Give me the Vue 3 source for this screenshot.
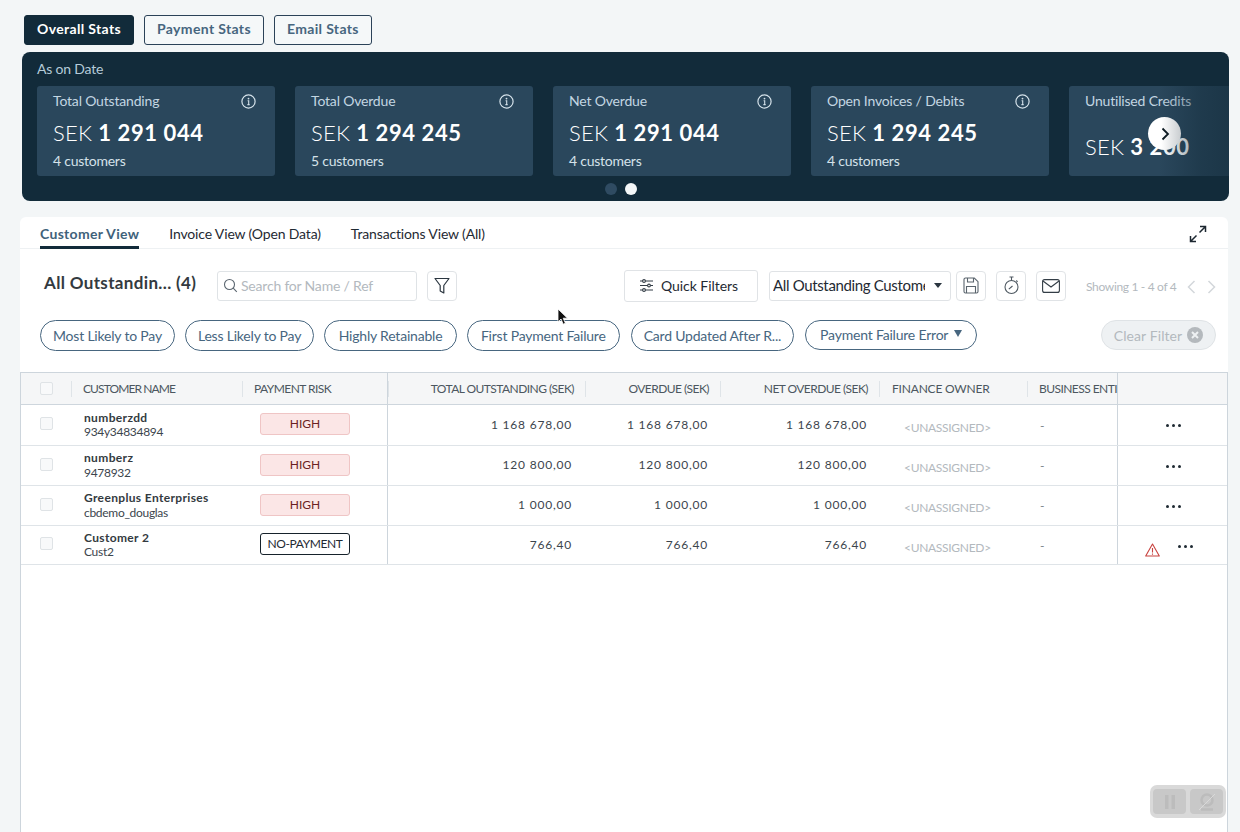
<script setup>
const statTabs = ['Overall Stats', 'Payment Stats', 'Email Stats'];

const cards = [
  { title: 'Total Outstanding', value: '1 291 044', sub: '4 customers' },
  { title: 'Total Overdue', value: '1 294 245', sub: '5 customers' },
  { title: 'Net Overdue', value: '1 291 044', sub: '4 customers' },
  { title: 'Open Invoices / Debits', value: '1 294 245', sub: '4 customers' },
  { title: 'Unutilised Credits', value: '3 200', sub: '' },
];

const viewTabs = ['Customer View', 'Invoice View (Open Data)', 'Transactions View (All)'];

const chips = ['Most Likely to Pay', 'Less Likely to Pay', 'Highly Retainable', 'First Payment Failure', 'Card Updated After R...'];

const columns = [
  { label: 'CUSTOMER NAME' },
  { label: 'PAYMENT RISK', end: true },
  { label: 'TOTAL OUTSTANDING (SEK)', right: true },
  { label: 'OVERDUE (SEK)', right: true },
  { label: 'NET OVERDUE (SEK)', right: true },
  { label: 'FINANCE OWNER' },
  { label: 'BUSINESS ENTI', last: true },
];

const rows = [
  { name: 'numberzdd', ref: '934y34834894', risk: 'HIGH', total: '1 168 678,00', overdue: '1 168 678,00', net: '1 168 678,00', h: 41 },
  { name: 'numberz', ref: '9478932', risk: 'HIGH', total: '120 800,00', overdue: '120 800,00', net: '120 800,00', h: 40 },
  { name: 'Greenplus Enterprises', ref: 'cbdemo_douglas', risk: 'HIGH', total: '1 000,00', overdue: '1 000,00', net: '1 000,00', h: 40 },
  { name: 'Customer 2', ref: 'Cust2', risk: 'NO-PAYMENT', total: '766,40', overdue: '766,40', net: '766,40', h: 39, warn: true },
];
</script>

<template>
  <div class="page">
    <div class="stat-tabs">
      <button v-for="(t, i) in statTabs" :key="t" class="stat-tab" :class="{ active: i === 0 }">{{ t }}</button>
    </div>

    <section class="panel">
      <div class="as-on">As on Date</div>
      <div class="carousel">
        <div v-for="c in cards" :key="c.title" class="card">
          <div class="card-head">
            <span>{{ c.title }}</span>
            <svg v-if="c.sub" class="info" width="15" height="15" viewBox="0 0 15 15" fill="none">
              <circle cx="7.5" cy="7.5" r="6.6" stroke="#d5e2ea" stroke-width="1.2" />
              <circle cx="7.5" cy="4.6" r="0.9" fill="#d5e2ea" />
              <path d="M6.6 6.8h1.1v3.6M6.4 10.6h2.3" stroke="#d5e2ea" stroke-width="1.1" />
            </svg>
          </div>
          <div class="card-value">SEK <b>{{ c.value }}</b></div>
          <div v-if="c.sub" class="card-sub">{{ c.sub }}</div>
        </div>
        <div class="fade"></div>
      </div>
      <div class="dots">
        <span class="dot"></span>
        <span class="dot on"></span>
      </div>
      <div class="next">
        <svg width="10" height="14" viewBox="0 0 10 14" fill="none">
          <path d="M2.5 1.5 8 7l-5.500 5.500" stroke="#0d1a22" stroke-width="1.8" />
        </svg>
      </div>
    </section>

    <section class="main">
      <div class="view-tabs">
        <span v-for="(t, i) in viewTabs" :key="t" class="view-tab" :class="{ active: i === 0 }">{{ t }}</span>
        <svg class="expand" width="18" height="18" viewBox="0 0 18 18" fill="none">
          <path d="M10.500 7.500 16.500 1.500M11 1.500h5.500V7" stroke="#1c2730" stroke-width="1.500" />
          <path d="M7.500 10.500 1.500 16.500M1.500 11v5.500H7" stroke="#1c2730" stroke-width="1.500" />
        </svg>
      </div>

      <div class="toolbar">
        <div class="list-title">All Outstandin... (4)</div>
        <div class="search">
          <svg width="15" height="15" viewBox="0 0 15 15" fill="none">
            <circle cx="6.500" cy="6.500" r="5" stroke="#5b6670" stroke-width="1.100" />
            <path d="m10.200 10.200 3.600 3.600" stroke="#5b6670" stroke-width="1.100" />
          </svg>
          <span>Search for Name / Ref</span>
        </div>
        <div class="icon-btn filter">
          <svg width="16" height="17" viewBox="0 0 16 17" fill="none">
            <path d="M1 1.500h14L9.800 8.500v7.500L6.200 14V8.500L1 1.500Z" stroke="#2b3640" stroke-width="1.200" stroke-linejoin="round" />
          </svg>
        </div>

        <div class="toolbar-right">
          <div class="quick">
            <svg width="15" height="13" viewBox="0 0 15 13" fill="none" stroke="#333d46" stroke-width="1.100">
              <path d="M1 2h13M1 6.500h13M1 11h13" />
              <circle cx="5" cy="2" r="1.400" fill="#fff" />
              <circle cx="10" cy="6.500" r="1.400" fill="#fff" />
              <circle cx="5" cy="11" r="1.400" fill="#fff" />
            </svg>
            <span>Quick Filters</span>
          </div>
          <div class="select">
            <span class="select-text">All Outstanding Customers</span>
            <i class="caret"></i>
          </div>
          <div class="icon-btn">
            <svg width="16" height="17" viewBox="0 0 16 17" fill="none" stroke="#5a646d" stroke-width="1.100">
              <path d="M1 2.500A1.500 1.500 0 0 1 2.500 1h8.800L15 4.700v9.800a1.500 1.500 0 0 1-1.500 1.500h-11A1.500 1.500 0 0 1 1 14.500Z" />
              <path d="M4.500 1v4h6V1M3.500 16v-6.500h9V16" />
            </svg>
          </div>
          <div class="icon-btn gap10">
            <svg width="15" height="19" viewBox="0 0 15 19" fill="none" stroke="#4f5962" stroke-width="1.100">
              <circle cx="7.500" cy="11" r="6.500" />
              <path d="M5.500 1h4M7.500 1v3.500M12.300 4.500l1.300 1.300M4.800 13.200l3.700-3.200" />
            </svg>
          </div>
          <div class="icon-btn gap10">
            <svg width="18" height="14" viewBox="0 0 18 14" fill="none" stroke="#333d46" stroke-width="1.100">
              <rect x="0.600" y="0.600" width="16.800" height="12.800" rx="2" />
              <path d="m1 2 8 6 8-6" />
            </svg>
          </div>
          <span class="showing">Showing 1 - 4 of 4</span>
          <svg class="chev" width="9" height="14" viewBox="0 0 9 14" fill="none">
            <path d="M7.500 1 1.500 7l6 6" stroke="#d3d7db" stroke-width="1.500" />
          </svg>
          <svg class="chev next-chev" width="9" height="14" viewBox="0 0 9 14" fill="none">
            <path d="m1.500 1 6 6-6 6" stroke="#d3d7db" stroke-width="1.500" />
          </svg>
        </div>
      </div>

      <div class="chips">
        <span v-for="c in chips" :key="c" class="chip">{{ c }}</span>
        <span class="chip drop">Payment Failure Error <i class="chip-caret"></i></span>
        <span class="clear">
          Clear Filter
          <svg width="16" height="16" viewBox="0 0 16 16">
            <circle cx="8" cy="8" r="8" fill="#b4b9bd" />
            <path d="m5 5 6 6M11 5l-6 6" stroke="#eef1f3" stroke-width="2" />
          </svg>
        </span>
      </div>

      <div class="table">
        <div class="row head">
          <div class="cell check"><i class="box"></i></div>
          <div
            v-for="col in columns"
            :key="col.label"
            class="cell th"
            :class="{ right: col.right, end: col.end, last: col.last }"
          >
            <span>{{ col.label }}</span>
          </div>
          <div class="cell actions"></div>
        </div>

        <div v-for="r in rows" :key="r.name" class="row" :style="{ height: r.h + 'px' }">
          <div class="cell check up"><i class="box"></i></div>
          <div class="cell name">
            <b>{{ r.name }}</b>
            <span>{{ r.ref }}</span>
          </div>
          <div class="cell risk end">
            <span class="badge" :class="{ none: r.risk !== 'HIGH' }">{{ r.risk }}</span>
          </div>
          <div class="cell num">{{ r.total }}</div>
          <div class="cell num">{{ r.overdue }}</div>
          <div class="cell num">{{ r.net }}</div>
          <div class="cell owner">&lt;UNASSIGNED&gt;</div>
          <div class="cell entity">-</div>
          <div class="cell actions">
            <svg v-if="r.warn" class="warn" width="15" height="14" viewBox="0 0 15 14" fill="none">
              <path d="M7.500 1 14.300 13H.7Z" stroke="#c8423f" stroke-width="1.100" stroke-linejoin="round" />
              <path d="M7.500 5v4.500M7.500 10.500v1.200" stroke="#c8423f" stroke-width="1.100" />
            </svg>
            <span class="more" :class="{ shifted: r.warn }"><i></i><i></i><i></i></span>
          </div>
        </div>
      </div>
    </section>

    <svg class="cursor" width="12" height="18" viewBox="0 0 12 18">
      <path d="M1 1v13l3-3 2.200 5.200 2.200-1-2.200-5h4.300Z" fill="#111" stroke="#fff" stroke-width="0.800" />
    </svg>

    <div class="recorder">
      <div class="rec-btn">
        <svg width="14" height="14" viewBox="0 0 14 14"><path d="M2 0h3.500v14H2zM8.500 0H12v14H8.500z" fill="#bcbcbc" /></svg>
      </div>
      <div class="rec-btn">
        <svg width="20" height="18" viewBox="0 0 20 18" fill="none" stroke="#bcbcbc">
          <circle cx="10" cy="7" r="5.500" stroke-width="2.500" />
          <path d="M4 16.500h12" stroke-width="2.500" />
          <path d="M2 17 18 1" stroke="#d9d9d9" stroke-width="1" />
        </svg>
      </div>
    </div>
  </div>
</template>

<style>
html,
body {
  margin: 0;
  background: #f3f6f7;
}
</style>

<style scoped>
.page {
  position: relative;
  width: 1240px;
  height: 832px;
  overflow: hidden;
  font-family: Lato, "Liberation Sans", sans-serif;
  background: #f3f6f7;
  color: #1f2a33;
}

.stat-tabs {
  display: flex;
  gap: 10px;
  padding: 15px 0 0 24px;
  height: 37px;
}
.stat-tab {
  height: 30px;
  padding: 0 12px 3px;
  background: #f5f8f9;
  border: 1px solid #2b4258;
  border-radius: 3px;
  font: 700 14px Lato, sans-serif;
  letter-spacing: 0.35px;
  color: #47667f;
}
.stat-tab.active {
  background: #122b3a;
  border-color: #122b3a;
  color: #fff;
}

.panel {
  position: relative;
  width: 1207px;
  height: 149px;
  margin-left: 22px;
  box-sizing: border-box;
  padding-top: 8px;
  background: #122b3a;
  border-radius: 8px;
  overflow: hidden;
}
.as-on {
  margin-left: 15px;
  font-size: 14px;
  line-height: 17px;
  letter-spacing: -0.2px;
  color: #b5cbd9;
}
.carousel {
  position: relative;
  display: flex;
  gap: 20px;
  margin: 9px 0 0 15px;
  overflow: hidden;
}
.card {
  flex: 0 0 238px;
  height: 90px;
  box-sizing: border-box;
  padding: 6px 16px 0;
  display: flex;
  flex-direction: column;
  background: #2a475c;
  border-radius: 3px;
}
.card-head {
  display: flex;
  justify-content: space-between;
  align-items: center;
  height: 17px;
  padding-right: 3px;
  font-size: 14px;
  letter-spacing: -0.18px;
  white-space: nowrap;
  color: #c3d6e2;
}
.info {
  margin-top: 1px;
}
.card-value {
  margin-top: auto;
  font-size: 22px;
  line-height: 26px;
  font-weight: 300;
  letter-spacing: 0.2px;
  color: #fff;
  white-space: nowrap;
  margin-bottom: 16px;
}
.card-value b {
  font-weight: 700;
  letter-spacing: 0.6px;
}
.card-value:not(:last-child) {
  margin-top: 11px;
  margin-bottom: 0;
}
.card-sub {
  margin-top: 6px;
  font-size: 14px;
  line-height: 17px;
  letter-spacing: -0.25px;
  color: #d5e2ea;
}
.fade {
  position: absolute;
  top: 0;
  right: 0;
  width: 70px;
  height: 90px;
  background: linear-gradient(90deg, rgba(18, 43, 58, 0), rgba(18, 43, 58, 0.45) 60%, rgba(18, 43, 58, 0.6));
}
.dots {
  display: flex;
  justify-content: center;
  gap: 8px;
  margin-top: 7px;
  margin-left: -10px;
}
.dot {
  width: 12px;
  height: 12px;
  border-radius: 50%;
  background: #2f4b62;
}
.dot.on {
  background: #f4f7f8;
}
.next {
  position: absolute;
  top: 65px;
  left: 1126px;
  width: 33px;
  height: 33px;
  display: flex;
  align-items: center;
  justify-content: center;
  border-radius: 50%;
  background: linear-gradient(90deg, #fff 40%, #c9cdd0);
}

.main {
  width: 1208px;
  height: 620px;
  margin: 16px 0 0 20px;
  box-sizing: border-box;
  background: #fff;
  border-radius: 6px 6px 0 0;
}

.view-tabs {
  position: relative;
  display: flex;
  gap: 30px;
  height: 32px;
  box-sizing: border-box;
  padding-left: 20px;
  border-bottom: 1px solid #eef1f3;
}
.view-tab {
  height: 32px;
  box-sizing: border-box;
  padding-top: 8px;
  font-size: 14px;
  line-height: 17px;
  letter-spacing: -0.15px;
  color: #1f2a33;
}
.view-tab.active {
  font-weight: 700;
  letter-spacing: 0.3px;
  color: #3f627b;
  border-bottom: 3px solid #122b3a;
}
.expand {
  position: absolute;
  top: 8px;
  right: 21px;
}

.toolbar {
  display: flex;
  align-items: center;
  height: 33px;
  margin-top: 20px;
  padding-left: 24px;
}
.list-title {
  width: 173px;
  margin-top: -7px;
  font-size: 17px;
  font-weight: 700;
  letter-spacing: 0.35px;
  color: #333a40;
  white-space: nowrap;
}
.search {
  width: 200px;
  height: 30px;
  box-sizing: border-box;
  padding-left: 5px;
  display: flex;
  align-items: center;
  gap: 3px;
  border: 1px solid #dfe3e6;
  border-radius: 3px;
  font-size: 14px;
  letter-spacing: -0.2px;
  color: #b3b9be;
}
.icon-btn {
  width: 30px;
  height: 30px;
  box-sizing: border-box;
  display: flex;
  align-items: center;
  justify-content: center;
  border: 1px solid #e0e3e6;
  border-radius: 4px;
}
.icon-btn.filter {
  margin-left: 10px;
}
.icon-btn.gap10 {
  margin-left: 10px;
}
.toolbar-right {
  margin-left: 167px;
  display: flex;
  align-items: center;
}
.quick {
  width: 134px;
  height: 32px;
  box-sizing: border-box;
  padding-left: 14px;
  display: flex;
  align-items: center;
  gap: 7px;
  border: 1px solid #e0e3e6;
  border-radius: 3px;
  font-size: 14px;
  letter-spacing: -0.05px;
  color: #1f2a33;
}
.select {
  position: relative;
  width: 182px;
  height: 30px;
  margin: 0 5px 0 11px;
  box-sizing: border-box;
  padding: 0 25px 2px 3px;
  display: flex;
  align-items: center;
  border: 1px solid #e0e3e6;
  border-radius: 3px;
  font-size: 15px;
  letter-spacing: -0.35px;
  color: #1f2a33;
}
.select-text {
  overflow: hidden;
  white-space: nowrap;
}
.caret {
  position: absolute;
  right: 8px;
  top: 11px;
  border: 4.500px solid transparent;
  border-top: 5px solid #2b3640;
  border-bottom: 0;
}
.showing {
  margin: 2px 0 0 20px;
  width: 101px;
  font-size: 12px;
  letter-spacing: -0.33px;
  white-space: nowrap;
  color: #b3b9be;
}
.chev {
  margin-top: 2px;
}
.next-chev {
  margin-left: 11px;
}

.chips {
  position: relative;
  display: flex;
  gap: 10px;
  margin-top: 18px;
  padding-left: 20px;
  height: 31px;
}
.chip {
  height: 31px;
  box-sizing: border-box;
  padding: 0 12px;
  display: flex;
  align-items: center;
  border: 1px solid #47667f;
  border-radius: 16px;
  font-size: 14px;
  letter-spacing: -0.2px;
  white-space: nowrap;
  color: #47667f;
}
.chip:nth-child(3) {
  padding: 0 13.500px;
}
.chip:nth-child(4) {
  padding: 0 13px;
}
.chip:nth-child(5) {
  margin-left: 1px;
}
.chip.drop {
  height: 30px;
  margin-left: 1px;
  padding: 0 14px 2px;
}
.chip-caret {
  display: inline-block;
  margin: 0 0 2px 6px;
  border: 4.500px solid transparent;
  border-top: 7px solid #47667f;
  border-bottom: 0;
}
.clear {
  position: absolute;
  left: 1081px;
  top: 0;
  width: 115px;
  height: 30px;
  box-sizing: border-box;
  display: flex;
  align-items: center;
  justify-content: center;
  gap: 5px;
  background: #eef1f3;
  border: 1px solid #dfe3e6;
  border-radius: 16px;
  font-size: 14px;
  letter-spacing: 0.1px;
  color: #b3b9be;
}

.table {
  width: 1208px;
  height: 460px;
  margin-top: 21px;
  box-sizing: border-box;
  border: 1px solid #cdd5dc;
  border-bottom: 0;
}
.row {
  display: grid;
  grid-template-columns: 50px 171px 146px 197px 135px 159px 148px 91px 109px;
  border-bottom: 1px solid #dfe4e8;
  box-sizing: border-box;
}
.row.head {
  height: 32px;
  background: #f5f6f7;
  border-bottom: 1px solid #ced6dd;
}
.cell {
  display: flex;
  align-items: center;
  min-width: 0;
  box-sizing: border-box;
}
.check {
  padding-left: 19px;
}
.check.up {
  padding-bottom: 3px;
}
.box {
  width: 11px;
  height: 11px;
  border: 1px solid #dfe3e6;
  border-radius: 2px;
  background: #f8f9fa;
}
.th {
  position: relative;
  padding-left: 12px;
  font-size: 12px;
  letter-spacing: -0.55px;
  white-space: nowrap;
  color: #4c5760;
}
.th:nth-child(2) {
  letter-spacing: -0.9px;
}
.th:nth-child(7) {
  padding-left: 13px;
  letter-spacing: -0.2px;
}
.th.right {
  justify-content: flex-end;
  padding: 0 11px 0 0;
}
.th.last {
  border-right: 1px solid #cdd5dc;
}
.th::before {
  content: "";
  position: absolute;
  left: 0;
  top: 8px;
  height: 16px;
  border-left: 1px solid #dfe4e8;
}
.end {
  border-right: 1px solid #cdd5dc;
}
.name {
  flex-direction: column;
  align-items: flex-start;
  justify-content: center;
  padding-left: 13px;
  font-size: 12px;
  line-height: 14.500px;
  white-space: nowrap;
  letter-spacing: -0.3px;
  color: #3c454d;
}
.name b {
  font-weight: 700;
  letter-spacing: 0.35px;
  color: #333a40;
}
.risk {
  padding: 0 0 2px 18px;
}
.badge {
  width: 90px;
  height: 22px;
  box-sizing: border-box;
  display: flex;
  align-items: center;
  justify-content: center;
  padding-bottom: 1px;
  background: #fbe6e6;
  border: 1px solid #efc5c5;
  border-radius: 3px;
  font-size: 12px;
  color: #6b1f22;
}
.badge.none {
  background: #fff;
  border-color: #16222b;
  letter-spacing: -0.4px;
  color: #1f2a33;
}
.num {
  justify-content: flex-end;
  padding: 0 12px 2px 0;
  font-size: 12px;
  letter-spacing: 0.8px;
  color: #3c454d;
}
.num:nth-child(4) {
  padding-right: 13px;
}
.owner {
  padding: 4px 0 0 25px;
  font-size: 12px;
  letter-spacing: -0.3px;
  color: #b3b9be;
}
.entity {
  padding-left: 13px;
  font-size: 12px;
  color: #7a838a;
  border-right: 1px solid #cdd5dc;
}
.actions {
  position: relative;
  justify-content: center;
}
.more {
  display: flex;
  gap: 3px;
  margin: 1px 0 0 2px;
}
.more.shifted {
  margin-left: 25px;
  margin-top: 2px;
}
.more i {
  width: 3px;
  height: 3px;
  border-radius: 50%;
  background: #1f2a33;
}
.warn {
  position: absolute;
  left: 27px;
  top: 17px;
}

.cursor {
  position: absolute;
  left: 557px;
  top: 308px;
}
.recorder {
  position: absolute;
  left: 1150px;
  top: 785px;
  width: 76px;
  height: 33px;
  box-sizing: border-box;
  padding: 4px 3px;
  display: flex;
  gap: 4px;
  background: #d9d9d9;
  border-radius: 7px;
}
.rec-btn {
  flex: 1;
  display: flex;
  align-items: center;
  justify-content: center;
  background: #c8c8c8;
  border-radius: 4px;
}
</style>
